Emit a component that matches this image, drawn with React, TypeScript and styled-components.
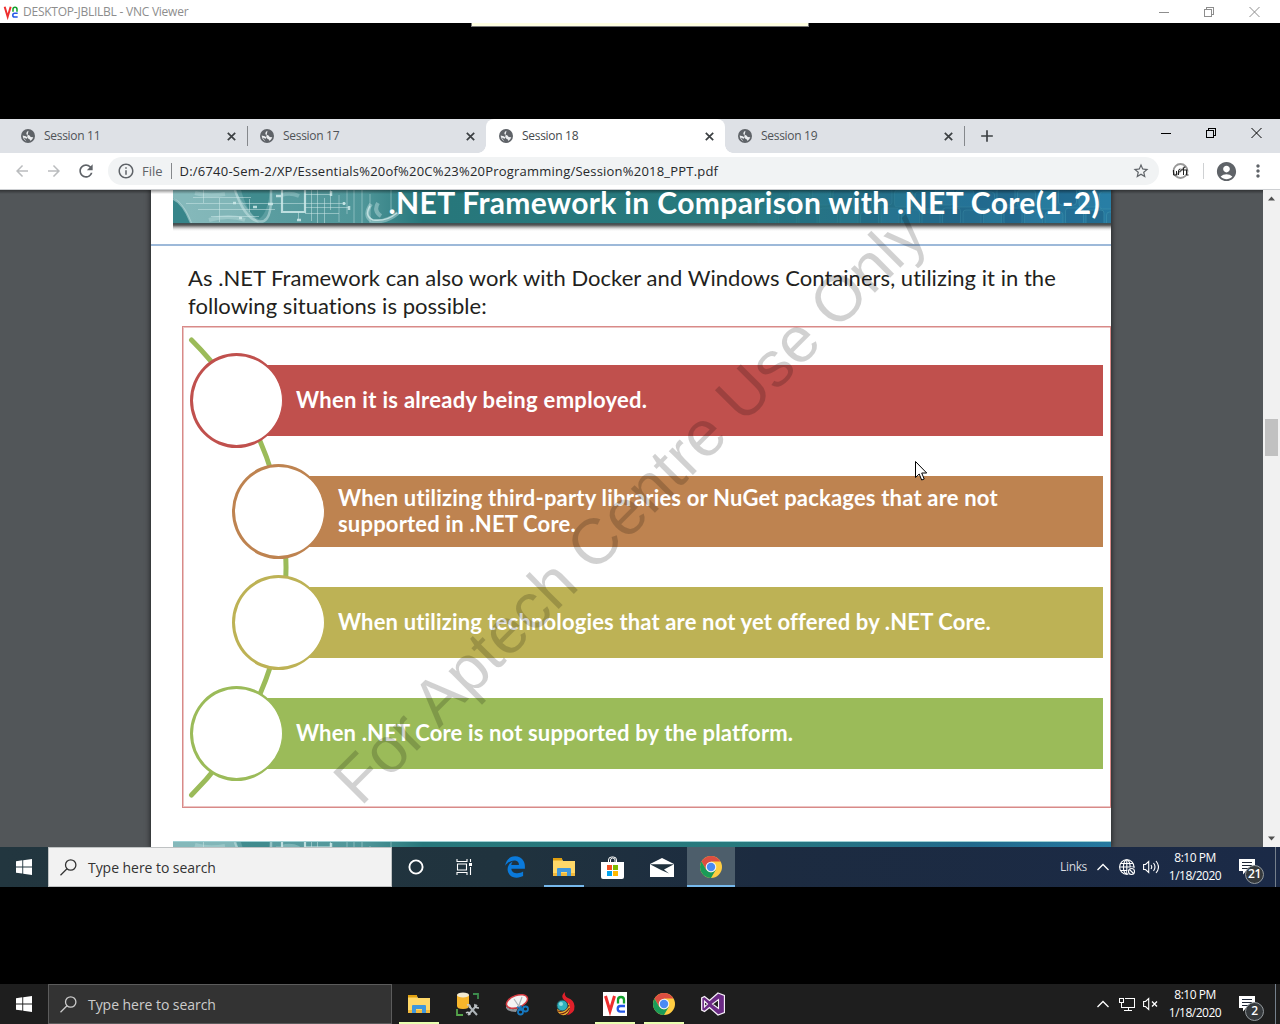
import React from 'react';
import styled, { createGlobalStyle } from 'styled-components';
import { MdStarBorder, MdAccountCircle, MdMoreVert, MdRefresh, MdArrowBack, MdArrowForward, MdAdd, MdInfoOutline } from 'react-icons/md';
import { FaEdgeLegacy } from 'react-icons/fa6';

const GlobalStyle = createGlobalStyle`
  *, *::before, *::after { box-sizing: border-box; }
  body { margin: 0; background: #000; overflow: hidden; }
  svg { display: block; flex: none; }
`;

const ui = '"Open Sans", "Noto Sans", sans-serif';
const slideFont = 'Lato, "Open Sans", sans-serif';

const Screen = styled.div`
  width: 1280px;
  height: 1024px;
  display: flex;
  flex-direction: column;
  background: #000;
  font-family: ${ui};
`;

/* VNC window */
const VncTitleBar = styled.header`
  height: 23px;
  flex: none;
  display: flex;
  align-items: center;
  padding-left: 3px;
  background: #fff;
  color: #8d8d8d;
  font-size: 12px;
  letter-spacing: -0.24px;
`;
const VncTitle = styled.span`
  margin-left: 4px;
  flex: 1;
  white-space: nowrap;
`;
const WindowButtons = styled.div<{ $color: string; $right: number }>`
  display: flex;
  gap: 35px;
  padding-right: ${p => p.$right}px;
  color: ${p => p.$color};
`;
const TopMargin = styled.div`
  height: 96px;
  flex: none;
  display: flex;
  justify-content: center;
  align-items: flex-start;
`;
const ToolbarTab = styled.div`
  width: 338px;
  height: 4px;
  background: #ffffe1;
  border: 1px solid #777;
  border-top: 0;
`;
const BottomMargin = styled.div`
  flex: 1;
`;

/* Browser */
const TabStrip = styled.div`
  height: 34px;
  flex: none;
  display: flex;
  align-items: stretch;
  background: #dee1e6;
  padding-left: 8px;
`;
const TabBox = styled.div<{ $active?: boolean }>`
  width: 239px;
  position: relative;
  display: flex;
  align-items: center;
  padding: 0 11px 0 13px;
  font-size: 12px;
  letter-spacing: -0.3px;
  color: ${p => (p.$active ? '#45494d' : '#4f5357')};
  background: ${p => (p.$active ? '#fff' : 'transparent')};
  border-radius: 8px 8px 0 0;
  ${p => p.$active && `
    &::before, &::after {
      content: '';
      position: absolute;
      bottom: 0;
      width: 8px;
      height: 8px;
    }
    &::before { left: -8px; background: radial-gradient(circle at 0 0, #dee1e6 7.5px, #fff 8px); }
    &::after { right: -8px; background: radial-gradient(circle at 100% 0, #dee1e6 7.5px, #fff 8px); }
  `}
`;
const TabLabel = styled.span`
  flex: 1;
  margin-left: 9px;
  padding-bottom: 2px;
`;
const TabDivider = styled.i<{ $shown: boolean }>`
  width: 1px;
  height: 20px;
  margin: 7px -1px 0 0;
  background: ${p => (p.$shown ? '#85888c' : 'transparent')};
`;
const NewTab = styled.div`
  flex: 1;
  display: flex;
  align-items: center;
  padding-left: 13px;
  color: #3c4043;
`;
const ButtonSlot = styled.div`
  padding-top: 9px;
`;
const AddressBar = styled.div`
  height: 37px;
  flex: none;
  display: flex;
  align-items: center;
  background: #fff;
  border-bottom: 1px solid #cdcfd2;
  padding: 0 11px 0 13px;
`;
const NavIcons = styled.div`
  display: flex;
  gap: 14px;
  align-items: center;
  color: #babcbe;
  width: 95px;
`;
const ReloadIcon = styled(MdRefresh)`
  color: #5f6368;
  margin-left: -1px;
`;
const Omnibox = styled.div`
  width: 1051px;
  height: 28px;
  display: flex;
  align-items: center;
  border-radius: 14px;
  background: #f1f3f4;
  padding: 0 9px;
  color: #5f6368;
`;
const Scheme = styled.span`
  font-size: 13px;
  margin-left: 7px;
`;
const SchemeDivider = styled.i`
  width: 1px;
  height: 16px;
  background: #85888c;
  margin: 0 8px 0 8px;
`;
const Url = styled.span`
  flex: 1;
  font-size: 13px;
  letter-spacing: 0.21px;
  color: #26282b;
  white-space: nowrap;
`;
const Extensions = styled.div`
  display: flex;
  align-items: center;
  margin-left: 13px;
  color: #5f6368;
`;
const ExtensionDivider = styled.i`
  width: 1px;
  height: 16px;
  margin: 0 11px 0 14px;
  background: #cfd1d3;
`;
const KebabIcon = styled(MdMoreVert)`
  margin-left: 10px;
`;

/* PDF viewport */
const Viewport = styled.main`
  height: 657px;
  flex: none;
  display: flex;
  justify-content: flex-end;
  overflow: hidden;
  position: relative;
  background: #525659;
  &::after {
    content: '';
    position: absolute;
    inset: 0 17px auto 0;
    height: 4px;
    background: linear-gradient(rgba(0, 0, 0, 0.4), transparent);
  }
`;
const Page = styled.article`
  width: 960px;
  margin-right: 152px;
  position: relative;
  background: #fff;
  box-shadow: 0 0 5px 1px rgba(0, 0, 0, 0.55);
`;
const Scrollbar = styled.div`
  width: 17px;
  display: flex;
  flex-direction: column;
  align-items: center;
  background: #f1f1f1;
  padding: 6px 0 6px;
`;
const Thumb = styled.div`
  width: 13px;
  height: 37px;
  margin-top: 218px;
  margin-bottom: auto;
  background: #c1c1c1;
`;
const Banner = styled.div`
  height: 33px;
  margin-left: 22px;
  display: grid;
  background: linear-gradient(90deg, #66a4a7 0, #4f9699 190px, #27777b 250px, #27797d 560px, #21698c 800px, #2579a0 100%);
  & > * { grid-area: 1 / 1; }
`;
const BannerTitle = styled.h1`
  margin: 0 11px 0 0;
  z-index: 1;
  text-align: right;
  font: bold 30px/24px ${slideFont};
  letter-spacing: 0.36px;
  color: #fff;
  white-space: nowrap;
  align-self: start;
`;
const BannerShadow = styled.div`
  height: 8px;
  margin-left: 22px;
  background: linear-gradient(#3d4f52 0, #555 2px, #aaa 4px, #e8e8e8 6px, #fff 8px);
`;
const Rule = styled.div`
  height: 2px;
  margin-top: 13px;
  background: #9db9d9;
`;
const Intro = styled.p`
  margin: 18px 0 0 37px;
  font: 22px/28px ${slideFont};
  font-variant-ligatures: none;
  letter-spacing: 0.04px;
  color: #231f20;
  white-space: nowrap;
`;
const Figure = styled.section`
  height: 482px;
  margin: 6px 0 0 31px;
  position: relative;
  border: 1px solid #d88a88;
  box-shadow: inset 1px 1px #ecc4c3, inset 0 -1px #ecc4c3;
  padding: 38px 7px 0 8px;
  display: flex;
  flex-direction: column;
  gap: 40px;
`;
const Arc = styled.svg`
  position: absolute;
  left: 1px;
  top: 0;
`;
const Bar = styled.div<{ $color: string; $inset: number; $tracking: number }>`
  height: 71px;
  flex: none;
  position: relative;
  margin-left: ${p => 46 + p.$inset}px;
  padding: 0 0 2px 59px;
  display: flex;
  align-items: center;
  background: ${p => p.$color};
  color: #fff;
  font: bold 22px/26px ${slideFont};
  letter-spacing: ${p => p.$tracking}px;
  white-space: pre;
  &::before {
    content: '';
    position: absolute;
    left: -47px;
    top: -12px;
    width: 93px;
    height: 95px;
    border-radius: 50%;
    background: #fff;
    border: 3px solid ${p => p.$color};
    border-right-width: 1px;
  }
`;
const Watermark = styled.div`
  position: absolute;
  left: 210px;
  top: 563px;
  font: 64.4px/64.4px "Liberation Sans", Arial, sans-serif;
  color: rgba(0, 0, 0, 0.18);
  white-space: nowrap;
  transform-origin: 0 54.5px;
  transform: rotate(-45deg);
`;
const NextBanner = styled(Banner)`
  height: 6px;
  margin-top: 33px;
  overflow: hidden;
  border-top: 1px solid #9fd0d4;
`;
const Pointer = styled.svg`
  position: absolute;
  left: 915px;
  top: 271px;
`;

/* Taskbars */
const Taskbar = styled.footer<{ $remote?: boolean }>`
  height: 40px;
  flex: none;
  display: flex;
  align-items: stretch;
  color: #fff;
  background: ${p => (p.$remote ? 'linear-gradient(90deg, #22363f 0, #20333e 500px, #1c2b40 760px, #1b2a47 100%)' : '#1e1e1e')};
`;
const StartButton = styled.div`
  width: 48px;
  display: grid;
  place-items: center;
`;
const SearchBox = styled.div<{ $remote?: boolean }>`
  width: 344px;
  display: flex;
  align-items: center;
  gap: 11px;
  padding-left: 11px;
  font-size: 14px;
  letter-spacing: -0.05px;
  border: 1px solid ${p => (p.$remote ? '#bfc2c3' : '#5c5c5c')};
  background: ${p => (p.$remote ? '#f2f2f2' : '#333')};
  color: ${p => (p.$remote ? '#333' : '#ccc')};
`;
const Apps = styled.div<{ $start: number }>`
  display: flex;
  margin-left: ${p => p.$start}px;
`;
const AppButton = styled.div<{ $width?: number; $line?: string; $active?: boolean }>`
  width: ${p => p.$width ?? 49}px;
  display: grid;
  place-items: center;
  position: relative;
  background: ${p => (p.$active ? 'linear-gradient(90deg, transparent 1px, #4d5e6b 1px)' : 'none')};
  &::after {
    content: '';
    position: absolute;
    bottom: 0;
    left: ${p => (p.$active ? 1 : 5)}px;
    right: ${p => (p.$active ? 0 : 4)}px;
    height: 2px;
    background: ${p => p.$line ?? 'transparent'};
  }
`;
const Tray = styled.div`
  margin-left: auto;
  display: flex;
  align-items: center;
  font-size: 12px;
  letter-spacing: -0.35px;
`;
const LinksLabel = styled.span`
  color: #d5d9df;
  padding-bottom: 1px;
`;
const TrayIcon = styled.div<{ $gap: number }>`
  margin-left: ${p => p.$gap}px;
`;
const Clock = styled.time`
  width: 60px;
  margin-left: 6px;
  text-align: center;
  line-height: 18px;
  letter-spacing: -0.5px;
  padding-bottom: 1px;
`;
const Notifications = styled.div`
  position: relative;
  width: 51px;
  height: 40px;
  padding: 12px 0 0 14px;
  border-right: 1px solid #75808c;
  margin-right: 4px;
`;
const Badge = styled.span`
  position: absolute;
  left: 20px;
  top: 18px;
  width: 19px;
  height: 19px;
  border-radius: 50%;
  border: 1px solid #949a9e;
  background: #35393c;
  font-size: 12px;
  line-height: 16px;
  text-align: center;
  font-weight: 600;
`;

const Globe = () => (
  <svg width="14" height="14" viewBox="0 0 14 14">
    <circle cx="7" cy="7" r="7" fill="#5f6368" />
    <path d="M7.500 1.700Q5.600 2.300 5.300 4.200 5.200 6 7.300 6.100 8.800 6.200 9.200 7.500 9.800 8.300 12.300 8.100 11.800 10.600 9.500 12 9.300 10.200 8 9.900 6.800 9.500 6.500 8.400 5.500 7.300 1.700 6.600 1.700 10.500 5.300 12.200" fill="#eceef0" />
    <path d="M7.800 1.800Q8.500 4.600 11.800 4.800 10.500 2.200 7.800 1.800z" fill="#5f6368" />
    <path d="M2.600 8.600 5.300 12.200 6.800 12.500Q5.500 10.800 6.800 10.200z" fill="#5f6368" />
  </svg>
);
const TabClose = () => <svg width="9" height="9"><path d="m.8.8 7.400 7.400M8.200.8.8 8.200" stroke="#3c4043" strokeWidth="1.700" /></svg>;
const VncLogo = ({ size }: { size: number }) => (
  <svg width={size} height={size} viewBox="0 0 24 24" fill="none">
    <rect width="24" height="24" fill="#fff" />
    <path d="M2.500 4 7 19 11.500 4" stroke="#ee2e2e" strokeWidth="3" />
    <path d="M15 11.500V8q0-3 3-3t3 3v3.500" stroke="#12a12c" strokeWidth="2.300" />
    <path d="M22 14H17.500q-2.800 0-2.800 2.800t2.800 2.800H22" stroke="#2458e8" strokeWidth="2.300" />
  </svg>
);
const Windows = () => (
  <svg width="16" height="16" viewBox="0 0 16 16" fill="#fff">
    <path d="M0 2.200 6.300 1.300V7.500H0zM7.200 1.200 16 0V7.500H7.200zM0 8.400H6.300V14.600L0 13.700zM7.200 8.400H16V16L7.200 14.800z" />
  </svg>
);
const SearchIcon = () => (
  <svg width="17" height="17" viewBox="0 0 17 17" fill="none" stroke="currentColor" strokeWidth="1.300">
    <circle cx="10.700" cy="6" r="5.200" /><path d="M7 9.800.5 16.300" />
  </svg>
);
const Minimize = () => <svg width="10" height="10" shapeRendering="crispEdges"><path d="M0 5.500h10" stroke="currentColor" /></svg>;
const Restore = () => (
  <svg width="10" height="10" fill="none" stroke="currentColor" shapeRendering="crispEdges">
    <path d="M.5 2.500h7v7h-7zM2.500 2.500v-2h7v7h-2" />
  </svg>
);
const CloseIcon = () => <svg width="11" height="10" stroke="currentColor"><path d="M.5 0 10.500 10M10.500 0 .5 10" /></svg>;
const Controls = ({ color, right }: { color: string; right: number }) => (
  <WindowButtons $color={color} $right={right}><Minimize /><Restore /><CloseIcon /></WindowButtons>
);

const Explorer = () => (
  <svg width="22" height="20" viewBox="0 0 22 20">
    <path d="M0 2h9l1 2h12v15H0z" fill="#ffd868" /><path d="M0 1h9v2.500H0z" fill="#e0a010" />
    <path d="M0 16h22v3H0z" fill="#f2b93b" />
    <path d="M4 19v-7q0-1 1-1h12q1 0 1 1v7h-4v-4H8v4z" fill="#3f97dc" />
  </svg>
);
const Chrome = () => (
  <svg width="22" height="22" viewBox="0 0 22 22">
    <circle cx="11" cy="11" r="11" fill="#ffcd42" />
    <path d="M1.500 5.500A11 11 0 0 1 20.500 5.500H11L6.200 13.700z" fill="#dc4e41" />
    <path d="M1.500 5.500 6.200 13.700 11 16.500 10.500 22A11 11 0 0 1 1.500 5.500zM11 16.500l4.800-2.800L11 22h-1z" fill="#1a9b58" />
    <circle cx="11" cy="11" r="5.300" fill="#f3f3f3" /><circle cx="11" cy="11" r="4.200" fill="#4a8af4" />
  </svg>
);
const Cortana = () => <svg width="16" height="16"><circle cx="8" cy="8" r="6.600" fill="none" stroke="#fff" strokeWidth="1.900" /></svg>;
const TaskView = () => (
  <svg width="17" height="16" fill="none" stroke="#fff" strokeWidth="1.100">
    <path d="M1 0v2.500h10V0M1.500 5h9v6h-9zM1 16v-2.500h10V16M14.500 0v3M14.500 8v8" /><path d="M13 4h3v3h-3z" fill="#fff" stroke="none" />
  </svg>
);
const Store = () => (
  <svg width="23" height="23" viewBox="0 0 23 23">
    <path d="M7.500 6V4q0-3 3-3h2q3 0 3 3v2M9.500 6V4q0-2 2-2 2.500 0 2.500 2v2" fill="none" stroke="#fff" />
    <path d="M0 6h23v15q0 2-2 2H2q-2 0-2-2z" fill="#fff" />
    <path d="M6 9h5v5H6z" fill="#f25022" /><path d="M12 9h5v5h-5z" fill="#7fba00" /><path d="M6 15h5v5H6z" fill="#00a4ef" /><path d="M12 15h5v5h-5z" fill="#ffb900" />
  </svg>
);
const Mail = () => (
  <svg width="24" height="19" viewBox="0 0 24 19">
    <path d="M0 6 12 0 24 6V19H0z" fill="#fff" /><path d="M0 6.200H24L14 11.500 19 15.500 11 12z" fill="#20323e" />
  </svg>
);
const DbTools = () => (
  <svg width="24" height="24" viewBox="0 0 24 24" fill="none">
    <path d="M1 3v11q0 3 6 3t6-3V3z" fill="#f7b52b" /><ellipse cx="7" cy="3" rx="6" ry="2.600" fill="#f3ead0" />
    <path d="M17 2h5v5" stroke="#3c8c4c" strokeWidth="1.800" /><path d="M1 17v6h6" stroke="#56a64b" strokeWidth="1.800" />
    <path d="M12 23 21 13M13 14l8 9" stroke="#aeb4b8" strokeWidth="2" /><path d="M19 12q-1 4 4 4M11 13q4-1 3 3M10 21q3-2 4 2" stroke="#c4c8cb" strokeWidth="1.500" />
  </svg>
);
const Snipping = () => (
  <svg width="24" height="23" viewBox="0 0 24 23" fill="none">
    <path d="M1 13q5 5 12 2l-2 4Q3 19 1 15z" fill="#8f9499" />
    <ellipse cx="12" cy="8.500" rx="11" ry="6" transform="rotate(-20 12 8.500)" fill="#f4f4f4" stroke="#d53a40" strokeWidth="1.500" />
    <path d="m9 6 6 9M17 4l-4 11" stroke="#adb3b7" strokeWidth="1.200" />
    <circle cx="15.500" cy="19" r="2.500" stroke="#1679c2" strokeWidth="1.800" /><circle cx="20.500" cy="16" r="2.500" stroke="#1679c2" strokeWidth="1.800" />
    <path d="m12 14 6 2.500M15.500 12.500l1 5" stroke="#1679c2" strokeWidth="1.800" />
  </svg>
);
const Flame = () => (
  <svg width="20" height="24" viewBox="0 0 20 24">
    <path d="M9 0Q4 4 8 8q6 4 6 9-1 5-4 6.500Q19 22 18.500 14 18 8 12 6 8 4 9 0z" fill="#e0202a" />
    <path d="M1 17q5 3 9-1 3-3 2-6 4 6 0 11-4 4-8 1-3-2-3-5z" fill="#f1b02f" />
    <path d="M1.500 19q7 2 11.500-6M4 22q6 0 9.500-6" stroke="#6d2015" strokeWidth="1.200" fill="none" />
    <circle cx="6.300" cy="13.500" r="5.300" fill="#30b2bd" stroke="#27545b" strokeWidth=".8" /><circle cx="5" cy="12" r="2" fill="#8fe0e2" />
  </svg>
);
const VisualStudio = () => (
  <svg width="24" height="24" viewBox="0 0 24 24">
    <path d="M17 1 23.500 3.500V20.500L17 23 8.500 15.500 3.500 19.500.7 18V6L3.500 4.500 8.500 8.500z" fill="#6b2a85" stroke="#f6f0f8" strokeWidth="1.300" />
    <path d="M17.500 7.500v9L11.500 12zM3.500 9v6L6.500 12z" fill="#1e1e1e" stroke="#f6f0f8" strokeWidth="1.100" />
  </svg>
);

const Chevron = () => <svg width="12" height="8" fill="none" stroke="#fff" strokeWidth="1.300"><path d="m.5 7 5.500-5.500L11.500 7" /></svg>;
const NoInternet = () => (
  <svg width="17" height="17" fill="none" stroke="#fff" strokeWidth="1.100">
    <circle cx="7.800" cy="8" r="7.200" /><ellipse cx="7.800" cy="8" rx="3.400" ry="7.200" /><path d="M.5 8h15M1.500 4.500h12.500M1.500 11.500H10M7.800 1v14" />
    <circle cx="12.500" cy="12.500" r="4.300" fill="#1b2a44" stroke="none" /><circle cx="12.500" cy="12.500" r="3" /><path d="m10.500 10.500 4 4" />
  </svg>
);
const Speaker = ({ muted }: { muted?: boolean }) => (
  <svg width="16" height="14" fill="none" stroke="#fff" strokeWidth="1.100">
    <path d="M.6 4.500H2.500L5.700 1.500v11L2.500 9.500H.6z" />
    {muted ? <path d="m9 4.500 5 5M14 4.500l-5 5" strokeWidth="1.300" /> : <path d="M8 5q1.500 2 0 4M10.500 3q3 4 0 8M13 1q5 6 0 12" />}
  </svg>
);
const Ethernet = () => (
  <svg width="16" height="15" fill="none" stroke="#fff" shapeRendering="crispEdges">
    <path d="M5.500 1.500h10v9h-10M3 10.500h4M9.500 10.500v3M5 13.500h8M.5 1.500h4v4h-4zM2.500 6v4.500h3" />
  </svg>
);
const ActionCenter = () => (
  <svg width="16" height="16"><path d="M0 0h16v12H7l-3 3.500V12H0z" fill="#fff" /><path d="M3 3.500h10M3 6.500h10M3 9.500h7" stroke="#1e2636" /></svg>
);

const CircuitArt = () => (
  <svg width="250" height="33" fill="none" stroke="#cfeaea" strokeOpacity=".5">
    <path d="M0 8Q10 13 18 33H86Q67 10 62 0H0z" fill="#b8dadb" fillOpacity=".38" stroke="none" />
    <path d="M0 8Q10 13 18 33H0z" fill="#37858a" stroke="none" />
    <path d="M0 9Q10 13 18 33" strokeWidth="2" />
    <path d="M68 0Q75 25 86 29 95 23 97 0z" fill="#297b80" fillOpacity=".55" stroke="none" />
    <path d="M62 0Q71 27 84 31T98 12V0" strokeWidth="2.500" />
    <path d="M109 0V22H132V0" strokeWidth="2.200" strokeOpacity=".85" />
    <path d="M20 7.500h58M13 13.500h160M25 19.500h77M38 26.500h48M132 4.500h26M132 17.500h44M132 23.500h34M30.500 0v13M46.500 8v24M76.500 9v13M138.500 0v31M144.500 0v33M151.500 8v25M157.500 0v20M125.500 22v8" />
    <path d="M158 1v5M171 12v3M176 16v4M124 30h4M80 17h4M95 14h5M103 6h5M66 28h3M60 13h3" strokeWidth="2.500" strokeOpacity=".85" />
    <path d="M166 5v27M174 0v24M181 0v33M189 0v33M197 4v29M218 0v20" strokeOpacity=".22" strokeWidth="2" />
    <path d="M198 14q-8 12 1 17 14 2 26-8M205 13q-5 8 3 13" strokeWidth="4" strokeOpacity=".4" />
    <path d="M197 16q-6 10 3 14 13 2 24-7" strokeWidth="1.500" strokeOpacity=".8" />
    <path d="M109 5q8-3 17 1M22 3q14 4 30 1M36 30q20-6 36 0" strokeOpacity=".3" strokeWidth="4" />
  </svg>
);
const tileShades = ['#2d88a6', '#206184', '#2b83aa', '#1f6289', '#2b7596', '#226990', '#3183a9'];
const TileArt = () => (
  <svg width="938" height="33">
    {Array.from({ length: 36 }, (_, i) => {
      const column = i % 18;
      const row = Math.floor(i / 18);
      return <rect key={i} x={578 + column * 20.500 + row * 7} y={row * 20 + (column % 3) * 2 - 2} width="18" height="17" rx="3" fill={tileShades[(column * 3 + row * 2) % 7]} opacity={0.12 + column * 0.025} stroke="#4fa5b8" strokeWidth=".7" />;
    })}
  </svg>
);
const BlockedExtension = () => (
  <svg width="17" height="17" fill="none">
    <circle cx="8.500" cy="8" r="7" stroke="#999" strokeWidth="1.800" /><path d="m3.500 13 10-10" stroke="#aaa" strokeWidth="1.800" />
    <path d="M1.500 7v5h3V8M6.500 12V8q0-2 2-2M7.500 9l3-3M11.500 12V5q0-1 2-1M10.500 7h5M14.500 7v5h2" stroke="#222" />
  </svg>
);

const tabs = ['Session 11', 'Session 17', 'Session 18', 'Session 19'];
const points = [
  { text: 'When it is already being employed.', color: '#c0504d', inset: 0, tracking: 0.3 },
  { text: 'When utilizing third-party libraries or NuGet packages that are not\nsupported in .NET Core.', color: '#be8350', inset: 42, tracking: 0.19 },
  { text: 'When utilizing technologies that are not yet offered by .NET Core.', color: '#bdb255', inset: 42, tracking: 0.155 },
  { text: 'When .NET Core is not supported by the platform.', color: '#9bbb59', inset: 0, tracking: 0.16 },
];

const SystemTray = ({ remote, count }: { remote?: boolean; count: number }) => (
  <Tray>
    {remote && <LinksLabel>Links</LinksLabel>}
    <TrayIcon $gap={10}><Chevron /></TrayIcon>
    <TrayIcon $gap={10}>{remote ? <NoInternet /> : <Ethernet />}</TrayIcon>
    <TrayIcon $gap={remote ? 7 : 8}><Speaker muted={!remote} /></TrayIcon>
    <Clock>8:10 PM<br />1/18/2020</Clock>
    <Notifications><ActionCenter /><Badge>{count}</Badge></Notifications>
  </Tray>
);

export default function App() {
  return (
    <Screen>
      <GlobalStyle />
      <VncTitleBar>
        <VncLogo size={16} />
        <VncTitle>DESKTOP-JBLILBL - VNC Viewer</VncTitle>
        <Controls color="#8d8d8d" right={20} />
      </VncTitleBar>
      <TopMargin><ToolbarTab /></TopMargin>

      <TabStrip>
        {tabs.map((name, i) => (
          <React.Fragment key={name}>
            <TabBox $active={i === 2}>
              <Globe />
              <TabLabel>{name}</TabLabel>
              <TabClose />
            </TabBox>
            <TabDivider $shown={i === 0 || i === 3} />
          </React.Fragment>
        ))}
        <NewTab><MdAdd size={20} /></NewTab>
        <ButtonSlot><Controls color="#000" right={18} /></ButtonSlot>
      </TabStrip>
      <AddressBar>
        <NavIcons><MdArrowBack size={18} /><MdArrowForward size={18} /><ReloadIcon size={20} /></NavIcons>
        <Omnibox>
          <MdInfoOutline size={18} />
          <Scheme>File</Scheme>
          <SchemeDivider />
          <Url>D:/6740-Sem-2/XP/Essentials%20of%20C%23%20Programming/Session%2018_PPT.pdf</Url>
          <MdStarBorder size={18} />
        </Omnibox>
        <Extensions>
          <BlockedExtension />
          <ExtensionDivider />
          <MdAccountCircle size={23} />
          <KebabIcon size={20} />
        </Extensions>
      </AddressBar>

      <Viewport>
        <Page>
          <Banner>
            <CircuitArt />
            <TileArt />
            <BannerTitle>.NET Framework in Comparison with .NET Core(1-2)</BannerTitle>
          </Banner>
          <BannerShadow />
          <Rule />
          <Intro>
            As .NET Framework can also work with Docker and Windows Containers, utilizing it in the<br />
            following situations is possible:
          </Intro>
          <Figure>
            <Arc width="120" height="479" fill="none">
              <path d="M7.500 13A321 321 0 0 1 7.500 468" stroke="#9bbb59" strokeWidth="5" strokeLinecap="round" />
            </Arc>
            {points.map(p => (
              <Bar key={p.text} $color={p.color} $inset={p.inset} $tracking={p.tracking}>{p.text}</Bar>
            ))}
          </Figure>
          <NextBanner><CircuitArt /></NextBanner>
          <Watermark>For Aptech Centre Use Only</Watermark>
        </Page>
        <Scrollbar>
          <svg width="7" height="5"><path d="M0 4.500 3.500.5 7 4.500z" fill="#505050" /></svg>
          <Thumb />
          <svg width="7" height="5"><path d="M0 .5 3.500 4.500 7 .5z" fill="#505050" /></svg>
        </Scrollbar>
        <Pointer width="13" height="20"><path d="M.5.500v16l3.700-3.500 2.500 6 2.500-1-2.500-6h5z" fill="#fff" stroke="#000" /></Pointer>
      </Viewport>

      <Taskbar $remote>
        <StartButton><Windows /></StartButton>
        <SearchBox $remote><SearchIcon />Type here to search</SearchBox>
        <Apps $start={0}>
          <AppButton $width={48}><Cortana /></AppButton>
          <AppButton $width={48}><TaskView /></AppButton>
        </Apps>
        <Apps $start={2}>
          <AppButton><FaEdgeLegacy size={22} color="#0a7adb" /></AppButton>
          <AppButton $line="#76b9ed"><Explorer /></AppButton>
          <AppButton><Store /></AppButton>
          <AppButton><Mail /></AppButton>
          <AppButton $active $line="#76b9ed"><Chrome /></AppButton>
        </Apps>
        <SystemTray remote count={21} />
      </Taskbar>
      <BottomMargin />
      <Taskbar>
        <StartButton><Windows /></StartButton>
        <SearchBox><SearchIcon />Type here to search</SearchBox>
        <Apps $start={2}>
          <AppButton $line="#e9ffb0"><Explorer /></AppButton>
          <AppButton><DbTools /></AppButton>
          <AppButton><Snipping /></AppButton>
          <AppButton><Flame /></AppButton>
          <AppButton $line="#e9ffb0"><VncLogo size={24} /></AppButton>
          <AppButton $line="#e9ffb0"><Chrome /></AppButton>
          <AppButton><VisualStudio /></AppButton>
        </Apps>
        <SystemTray count={2} />
      </Taskbar>
    </Screen>
  );
}
